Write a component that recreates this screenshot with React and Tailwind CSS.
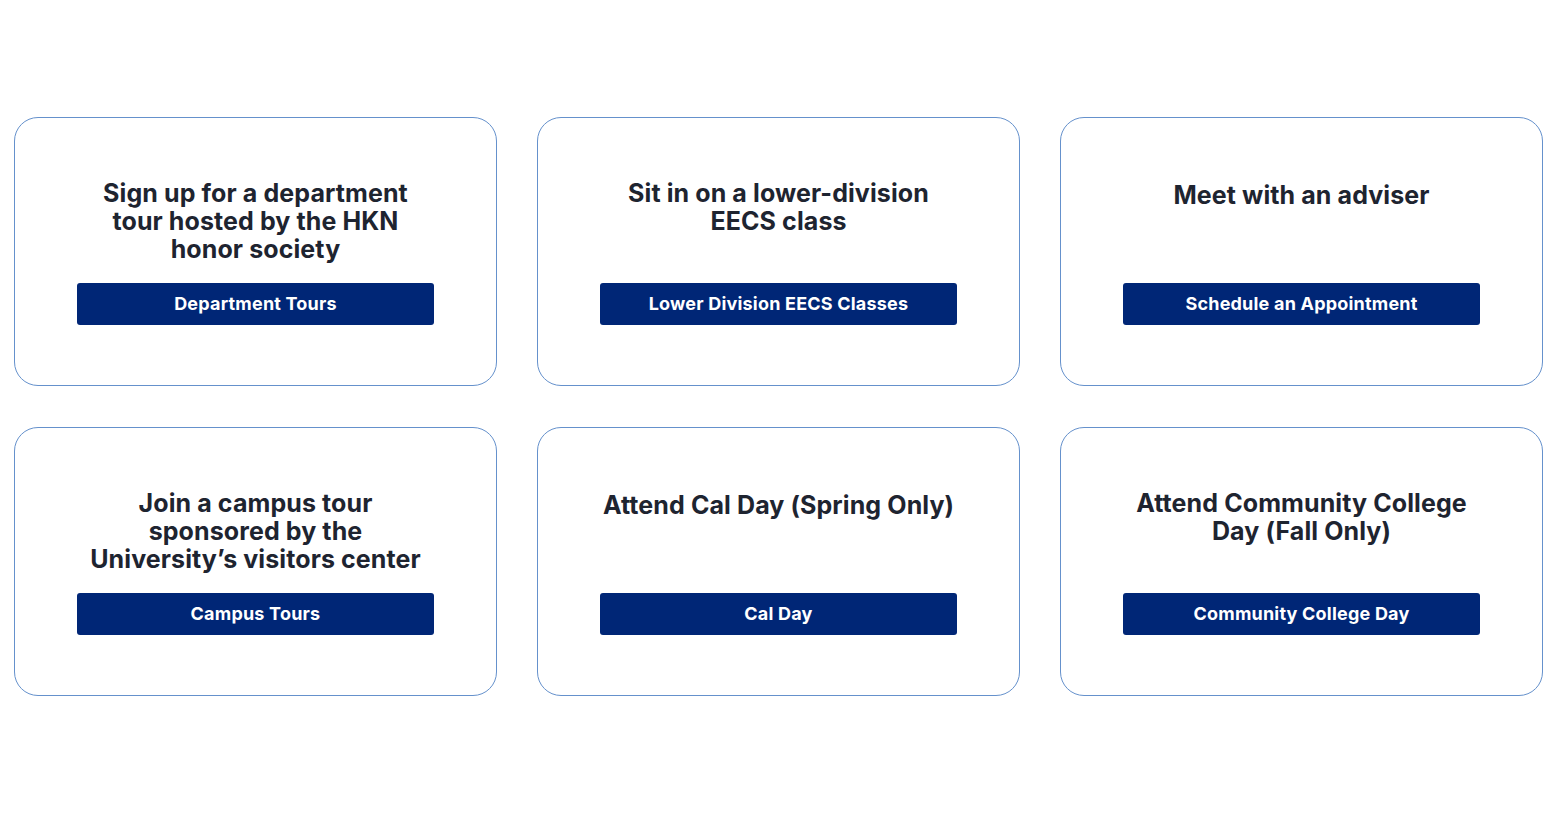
import React from "react";

const cards = [
  { title: ["Sign up for a department", "tour hosted by the HKN", "honor society"], button: "Department Tours" },
  { title: ["Sit in on a lower-division", "EECS class"], button: "Lower Division EECS Classes" },
  { title: ["Meet with an adviser"], button: "Schedule an Appointment" },
  { title: ["Join a campus tour", "sponsored by the", "University\u2019s visitors center"], button: "Campus Tours" },
  { title: ["Attend Cal Day (Spring Only)"], button: "Cal Day" },
  { title: ["Attend Community College", "Day (Fall Only)"], button: "Community College Day" },
];

export default function App() {
  return (
    <div
      className="w-full min-h-[820px] bg-white pt-[117px] pl-[14px]"
      style={{ fontFamily: "Inter, 'Noto Sans', sans-serif" }}
    >
      <div className="grid grid-cols-[483px_483px_483px] gap-x-[40px] gap-y-[41px] w-[1529px]">
        {cards.map((c, i) => (
          <div
            key={i}
            className="h-[269px] border border-[#6591cc] rounded-[24px] flex flex-col items-center justify-center"
          >
            <h2
              className={`w-[400px] h-[84px] text-center text-[25px] leading-[28px] font-bold tracking-[0.1px] text-[#1e2430] ${
                c.title.length === 1 ? "pt-[2px]" : ""
              }`}
            >
              {c.title.map((t, j) => (
                <React.Fragment key={j}>
                  {t}
                  {j < c.title.length - 1 && <br />}
                </React.Fragment>
              ))}
            </h2>
            <button className="mt-[20px] w-[357px] h-[42px] bg-[#002676] rounded-[3px] text-white text-[18px] font-bold tracking-[0.2px]">
              {c.button}
            </button>
          </div>
        ))}
      </div>
    </div>
  );
}
